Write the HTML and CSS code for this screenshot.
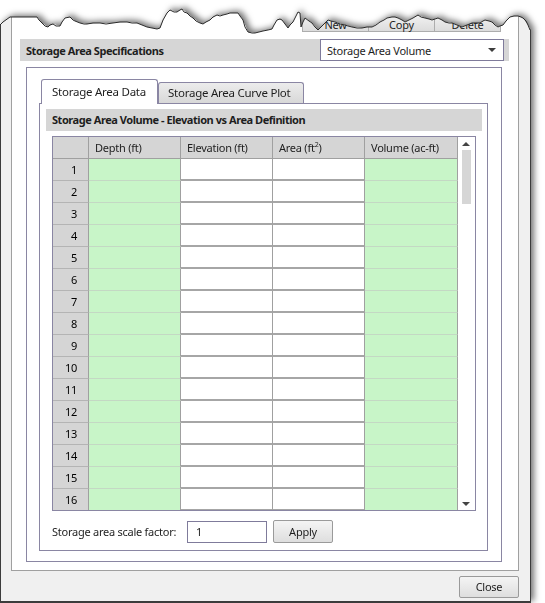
FILE: index.html
```html
<!DOCTYPE html>
<html>
<head>
<meta charset="utf-8">
<link rel="stylesheet" href="styles.css">
</head>
<body>
<div class="page">
  <div class="shadow-wrap">
    <div class="window">
      <div class="frame">
        <div class="topbtns">
          <span class="tbtn">New</span><span class="tbtn">Copy</span><span class="tbtn">Delete</span>
        </div>
        <div class="specbar">
          <span class="spectitle">Storage Area Specifications</span>
          <div class="combo"><span>Storage Area Volume</span><span class="arrow"></span></div>
        </div>
        <div class="group">
          <div class="tabs">
            <div class="tab active">Storage Area Data</div>
            <div class="tab">Storage Area Curve Plot</div>
          </div>
          <div class="panel">
            <div class="subbar">Storage Area Volume - Elevation vs Area Definition</div>
            <div class="grid">
              <div class="table">
                <div class="hc corner"></div><div class="hc">Depth (ft)</div><div class="hc">Elevation (ft)</div><div class="hc">Area (ft<sup>2</sup>)</div><div class="hc">Volume (ac-ft)</div>
                <div class="rh">1</div><div class="g"></div><div class="w"></div><div class="w"></div><div class="g"></div>
                <div class="rh">2</div><div class="g"></div><div class="w"></div><div class="w"></div><div class="g"></div>
                <div class="rh">3</div><div class="g"></div><div class="w"></div><div class="w"></div><div class="g"></div>
                <div class="rh">4</div><div class="g"></div><div class="w"></div><div class="w"></div><div class="g"></div>
                <div class="rh">5</div><div class="g"></div><div class="w"></div><div class="w"></div><div class="g"></div>
                <div class="rh">6</div><div class="g"></div><div class="w"></div><div class="w"></div><div class="g"></div>
                <div class="rh">7</div><div class="g"></div><div class="w"></div><div class="w"></div><div class="g"></div>
                <div class="rh">8</div><div class="g"></div><div class="w"></div><div class="w"></div><div class="g"></div>
                <div class="rh">9</div><div class="g"></div><div class="w"></div><div class="w"></div><div class="g"></div>
                <div class="rh">10</div><div class="g"></div><div class="w"></div><div class="w"></div><div class="g"></div>
                <div class="rh">11</div><div class="g"></div><div class="w"></div><div class="w"></div><div class="g"></div>
                <div class="rh">12</div><div class="g"></div><div class="w"></div><div class="w"></div><div class="g"></div>
                <div class="rh">13</div><div class="g"></div><div class="w"></div><div class="w"></div><div class="g"></div>
                <div class="rh">14</div><div class="g"></div><div class="w"></div><div class="w"></div><div class="g"></div>
                <div class="rh">15</div><div class="g"></div><div class="w"></div><div class="w"></div><div class="g"></div>
                <div class="rh">16</div><div class="g"></div><div class="w"></div><div class="w"></div><div class="g"></div>
              </div>
              <div class="scroll">
                <span class="sarrow up"></span>
                <span class="thumb"></span>
                <span class="sarrow down"></span>
              </div>
            </div>
            <div class="scale">
              <span class="scalelabel">Storage area scale factor:</span>
              <div class="input">1</div>
              <div class="btn apply">Apply</div>
            </div>
          </div>
        </div>
      </div>
      <div class="footer"><div class="btn close">Close</div></div>
    </div>
  </div>
  <svg class="tear" width="545" height="40" viewBox="0 0 545 40">
    <polyline fill="none" stroke="#2a2a2a" stroke-width="1" points="0,25 3,22 10,17 24,17 37,17 39,20 42,23 45,26 48,27 50,25 53,24 56,26 60,26 62,22 65,18 70,17 73,20 75,21 80,23 84,24 87,24 93,23 100,23 106,24 113,23 120,22 127,22 132,23 137,23 142,25 147,27 152,28 157,29 160,28 163,20 167,13 170,10 174,12 177,12 180,10 182,9 184,12 187,13 190,16 193,18 196,21 200,23 203,24 206,22 210,20 213,17 217,15 220,16 223,15 227,14 230,13 234,13 238,13 240,16 243,20 245,27 248,32 252,33 255,33 259,32 263,31 268,30 272,29 274,25 277,20 280,19 282,20 285,24 288,28 290,25 293,22 296,16 298,12 300,13 301,27 303,22 305,18 309,21 312,23 315,27 318,30 320,28 323,25 326,22 328,20 331,21 335,22 340,24 345,25 348,26 352,27 357,28 362,28 367,27 372,27 376,25 380,22 384,20 387,18 392,17 395,17 398,18 402,20 405,22 409,20 413,18 418,15 421,17 425,18 429,19 432,20 435,19 438,18 442,20 445,22 449,23 452,23 457,25 462,27 467,25 472,23 476,23 480,23 483,21 485,20 489,21 492,22 495,25 498,27 500,26 503,25 506,21 510,17 514,16 518,16 521,17 523,18 526,21 528,25 530,30"/>
  </svg>
</div>
</body>
</html>
```
FILE: styles.css
```css
* { box-sizing: border-box; }
html, body { margin: 0; padding: 0; background: #ffffff; }
body {
  width: 545px;
  height: 603px;
  overflow: hidden;
  font-family: "Noto Sans", sans-serif;
  font-size: 11px;
  letter-spacing: -0.25px;
  color: #1e1e1e;
}
.page { position: relative; width: 545px; height: 603px; }
.shadow-wrap {
  width: 545px;
  height: 603px;
  filter: drop-shadow(3px -2px 3px rgba(0,0,0,0.55));
}
.window {
  width: 531px;
  height: 603px;
  background: #f0f0f0;
  border-left: 1px solid #3c3c3c;
  border-right: 1px solid #3c3c3c;
  border-bottom: 2px solid #3c3c3c;
  padding: 0 11px 0 10px;
  display: flex;
  flex-direction: column;
  clip-path: polygon(0px 25px, 3px 22px, 10px 17px, 37px 17px, 42px 23px, 48px 27px, 53px 24px, 60px 26px, 65px 18px, 70px 17px, 75px 21px, 80px 23px, 87px 24px, 100px 23px, 113px 23px, 127px 22px, 137px 23px, 147px 27px, 157px 29px, 160px 28px, 167px 13px, 170px 10px, 177px 12px, 182px 9px, 187px 13px, 193px 18px, 200px 23px, 203px 24px, 210px 20px, 217px 15px, 223px 15px, 230px 13px, 238px 13px, 243px 20px, 248px 32px, 255px 33px, 263px 31px, 272px 29px, 277px 20px, 282px 20px, 288px 28px, 293px 22px, 298px 12px, 300px 13px, 301px 27px, 305px 18px, 312px 23px, 318px 30px, 323px 25px, 328px 20px, 335px 22px, 345px 25px, 352px 27px, 362px 28px, 372px 27px, 380px 22px, 387px 18px, 392px 17px, 398px 18px, 405px 22px, 413px 18px, 418px 15px, 425px 18px, 432px 20px, 438px 18px, 445px 22px, 452px 23px, 462px 27px, 472px 23px, 480px 23px, 485px 20px, 492px 22px, 498px 27px, 503px 25px, 510px 17px, 518px 16px, 523px 18px, 528px 25px, 531px 30px, 531px 603px, 0px 603px);
}
.tear { position: absolute; top: 0; left: 0; }

.frame {
  width: 508px;
  height: 571px;
  flex: none;
  background: #ffffff;
  border: 1px solid #a0a0a0;
  display: flex;
  flex-direction: column;
}
.topbtns {
  display: flex;
  justify-content: flex-end;
  margin: 14px 17px 0 0;
  height: 17px;
}
.tbtn {
  width: 67px;
  height: 17px;
  border: 1px solid #adadad;
  margin-left: -1px;
  background: linear-gradient(#f0f0f0, #dcdcdc);
  text-align: center;
  line-height: 17px;
  color: #1e1e1e;
}
.specbar {
  margin: 7px 9px 0 8px;
  height: 22px;
  background: #d6d6d6;
  display: flex;
  align-items: center;
  justify-content: space-between;
}
.spectitle { font-weight: bold; padding-left: 6px; letter-spacing: -0.45px; }
.combo {
  width: 184px;
  height: 22px;
  margin-right: 5px;
  background: #ffffff;
  border: 1px solid #7f7b9b;
  display: flex;
  align-items: center;
  justify-content: space-between;
  padding: 0 7px 0 6px;
}
.arrow {
  width: 0; height: 0;
  border-left: 4px solid transparent;
  border-right: 4px solid transparent;
  border-top: 4px solid #3c3c3c;
}
.group {
  margin: 6px 16px 0 14px;
  height: 495px;
  border: 1px solid #8a86a3;
  display: flex;
  flex-direction: column;
}
.tabs {
  display: flex;
  align-items: flex-end;
  height: 25px;
  margin: 11px 0 -1px 14px;
  position: relative;
  z-index: 1;
}
.tab {
  height: 21px;
  margin-bottom: 1px;
  padding: 0 9px;
  border: 1px solid #8a86a3;
  border-bottom: none;
  border-radius: 3px 3px 0 0;
  background: linear-gradient(#ececec, #d8d8d8);
  line-height: 19px;
  font-size: 11.5px;
  width: 146px;
}
.tab.active {
  height: 25px;
  margin-bottom: 0;
  width: 117px;
  background: #ffffff;
  line-height: 23px;
  padding: 0 10px;
}
.panel {
  margin: 0 13px 0 12px;
  height: 448px;
  border: 1px solid #8a86a3;
  display: flex;
  flex-direction: column;
}
.subbar {
  margin: 5px 5px 0 6px;
  height: 22px;
  background: #d6d6d6;
  font-weight: bold;
  letter-spacing: -0.45px;
  line-height: 22px;
  padding-left: 6px;
}
.grid {
  margin: 5px 11px 0 12px;
  height: 375px;
  border: 1px solid #8a86a3;
  display: flex;
  overflow: hidden;
}
.table {
  width: 405px;
  display: grid;
  grid-template-columns: 36px 92px 92px 92px 93px;
  grid-auto-rows: 22px;
  align-content: start;
}
.hc {
  background: #d5d5d5;
  border-right: 1px solid #a0a0a0;
  border-bottom: 1px solid #a0a0a0;
  padding-left: 6px;
  line-height: 21px;
}
.hc sup { font-size: 7px; vertical-align: 5px; line-height: 0; }
.rh {
  background: #d5d5d5;
  border-right: 1px solid #a0a0a0;
  border-bottom: 1px solid #b4b4b4;
  text-align: right;
  padding-right: 11px;
  line-height: 22px;
  color: #000;
}
.g {
  background: #c8f5c8;
  border-right: 1px solid #a0a0a0;
  border-bottom: 1px solid #c4d8c4;
}
.w {
  background: #ffffff;
  border-right: 1px solid #a0a0a0;
  border-bottom: 2px solid #a6a6a6;
}
.scroll {
  width: 16px;
  background: #ffffff;
  display: flex;
  flex-direction: column;
  align-items: center;
  padding: 5px 0 4px 0;
}
.sarrow {
  width: 0; height: 0;
  border-left: 4px solid transparent;
  border-right: 4px solid transparent;
}
.sarrow.up { border-bottom: 4px solid #444; }
.sarrow.down { border-top: 4px solid #444; margin-top: auto; }
.thumb {
  width: 9px;
  height: 54px;
  margin-top: 4px;
  background: #d6d6d6;
}
.scale {
  display: flex;
  align-items: center;
  margin: 9px 0 0 12px;
  height: 23px;
}
.scalelabel { width: 135px; }
.input {
  width: 80px;
  height: 22px;
  border: 1px solid #7f7b9b;
  background: #fff;
  padding-left: 8px;
  line-height: 20px;
}
.btn {
  height: 23px;
  border: 1px solid #9a9a9a;
  border-radius: 2px;
  background: linear-gradient(#f4f4f4, #dedede);
  text-align: center;
  line-height: 21px;
  color: #1e1e1e;
}
.apply { width: 60px; margin-left: 6px; }
.footer {
  display: flex;
  justify-content: flex-end;
  margin-top: 5px;
}
.close { width: 60px; height: 22px; line-height: 20px; }
```
